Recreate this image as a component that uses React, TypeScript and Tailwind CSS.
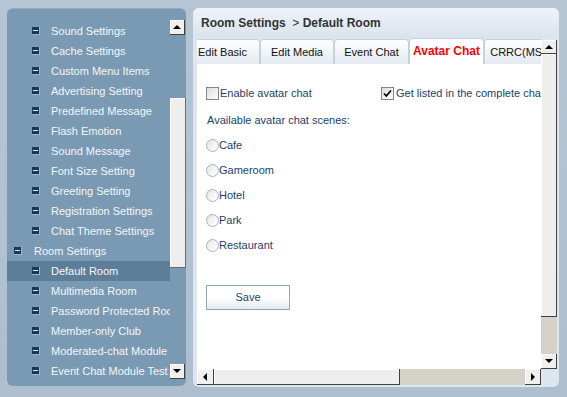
const treeItems: { label: string; level: 0 | 1; selected?: boolean }[] = [
  { label: "Sound Settings", level: 1 },
  { label: "Cache Settings", level: 1 },
  { label: "Custom Menu Items", level: 1 },
  { label: "Advertising Setting", level: 1 },
  { label: "Predefined Message", level: 1 },
  { label: "Flash Emotion", level: 1 },
  { label: "Sound Message", level: 1 },
  { label: "Font Size Setting", level: 1 },
  { label: "Greeting Setting", level: 1 },
  { label: "Registration Settings", level: 1 },
  { label: "Chat Theme Settings", level: 1 },
  { label: "Room Settings", level: 0 },
  { label: "Default Room", level: 1, selected: true },
  { label: "Multimedia Room", level: 1 },
  { label: "Password Protected Room", level: 1 },
  { label: "Member-only Club", level: 1 },
  { label: "Moderated-chat Module", level: 1 },
  { label: "Event Chat Module Test", level: 1 },
];

const tabs = [
  { label: "Edit Basic", w: "w-[75px]" },
  { label: "Edit Media", w: "w-[74px]" },
  { label: "Event Chat", w: "w-[75px]" },
  { label: "Avatar Chat", w: "w-[75px]", active: true },
  { label: "CRRC(MSN Avatar)", w: "w-[110px]" },
];

const scenes = ["Cafe", "Gameroom", "Hotel", "Park", "Restaurant"];

const Arrow = ({ dir }: { dir: "up" | "down" | "left" | "right" }) => {
  if (dir === "up")
    return <span className="w-0 h-0 border-x-[4px] border-x-transparent border-b-[4px] border-b-black" />;
  if (dir === "down")
    return <span className="w-0 h-0 border-x-[4px] border-x-transparent border-t-[4px] border-t-black" />;
  if (dir === "left")
    return <span className="w-0 h-0 border-y-[4px] border-y-transparent border-r-[4px] border-r-black" />;
  return <span className="w-0 h-0 border-y-[4px] border-y-transparent border-l-[4px] border-l-black" />;
};

const ScrollBtn = ({ dir, className = "" }: { dir: "up" | "down" | "left" | "right"; className?: string }) => (
  <div
    className={`flex items-center justify-center bg-[#efefef] border-r border-b border-[#404040] shadow-[inset_1px_1px_0_#ffffff] ${className}`}
  >
    <Arrow dir={dir} />
  </div>
);

const TreeIcon = () => (
  <span className="w-[8px] h-[8px] shrink-0 bg-[#17375c] border-r border-b border-[#9fb4c6] flex items-center justify-center">
    <span className="w-[5px] h-px bg-[#e8eef4]" />
  </span>
);

const Checkbox = ({ checked }: { checked?: boolean }) => (
  <span className="w-[13px] h-[13px] border border-[#858585] bg-gradient-to-br from-[#dedede] to-white flex items-center justify-center shrink-0">
    {checked && (
      <svg width="9" height="9" viewBox="0 0 9 9">
        <path d="M1 4.5 L3.3 7 L8 1.5" fill="none" stroke="#000" strokeWidth="1.8" />
      </svg>
    )}
  </span>
);

const Radio = () => (
  <span className="w-[13px] h-[13px] rounded-full border border-[#b2b2b2] bg-gradient-to-br from-[#e2e2e2] via-[#f4f4f4] to-white shrink-0" />
);

const LeftPanel = () => (
  <div className="w-[179px] h-[378px] rounded-[6px] bg-[#7a9ab4] border-t border-[#92adc3] flex overflow-hidden">
    <div className="w-[163px] pt-[12px] overflow-hidden">
      {treeItems.map((item) => (
        <div
          key={item.label}
          className={`h-[20px] flex items-center whitespace-nowrap text-[#f3f6f9] ${
            item.selected ? "bg-[#5d7e99]" : ""
          } ${item.level === 0 ? "pl-[7px]" : "pl-[25px]"}`}
        >
          <TreeIcon />
          <span className={item.level === 0 ? "ml-[12px]" : "ml-[11px]"}>{item.label}</span>
        </div>
      ))}
    </div>
    <div className="w-[16px] flex flex-col pt-[11px] pb-[7px]">
      <ScrollBtn dir="up" className="w-[15px] h-[15px]" />
      <div className="h-[63px]" />
      <div className="h-[170px] bg-[#eeeeee] border-r border-b border-[#6b6b6b] shadow-[inset_1px_1px_0_#ffffff]" />
      <div className="flex-1" />
      <ScrollBtn dir="down" className="w-[15px] h-[15px]" />
    </div>
  </div>
);

const RightPanel = () => (
  <div className="w-[366px] h-[379px] rounded-[6px] bg-[#dde6ef] flex flex-col overflow-hidden">
    <div className="h-[30px] shrink-0 flex items-center pl-[8px] bg-gradient-to-b from-[#eef3f8] to-[#dae3ec] text-[12px] text-[#333333] whitespace-pre">
      <span className="font-bold">Room Settings</span>
      <span>{"  > "}</span>
      <span className="font-bold">Default Room</span>
    </div>
    <div className="flex-1 flex flex-col pl-[4px] pr-[2px] pb-[2px]">
      <div className="flex h-[331px]">
        <div className="w-[344px] flex flex-col overflow-hidden">
          <div className="h-[26px] shrink-0 flex items-end overflow-hidden">
            <div className="flex items-end -ml-[12px] shrink-0">
              {tabs.map((tab) =>
                tab.active ? (
                  <div
                    key={tab.label}
                    className={`${tab.w} h-[26px] shrink-0 bg-white border border-b-0 border-[#c5d2de] rounded-t-[4px] flex justify-center pt-[6px] text-[12px] font-bold text-[#ff0000] whitespace-nowrap`}
                  >
                    {tab.label}
                  </div>
                ) : (
                  <div
                    key={tab.label}
                    className={`${tab.w} h-[25px] shrink-0 bg-gradient-to-b from-white to-[#e3eaf1] border border-b-0 border-[#c5d2de] rounded-t-[4px] flex justify-center pt-[6px] text-[#111111] whitespace-nowrap`}
                  >
                    {tab.label}
                  </div>
                )
              )}
            </div>
          </div>
          <div className="flex-1 bg-white pt-[23px] pl-[9px] text-[#1b3f6b] whitespace-nowrap">
            <div className="flex items-center h-[13px]">
              <div className="w-[175px] flex items-center shrink-0">
                <Checkbox />
                <span className="ml-[1px]">Enable avatar chat</span>
              </div>
              <div className="flex items-center shrink-0">
                <Checkbox checked />
                <span className="ml-[2px]">Get listed in the complete chat room list</span>
              </div>
            </div>
            <div className="mt-[13px] leading-[14px] pl-[1px]">Available avatar chat scenes:</div>
            <div className="mt-[6px]">
              {scenes.map((s) => (
                <div key={s} className="h-[25px] flex items-center">
                  <Radio />
                  <span>{s}</span>
                </div>
              ))}
            </div>
            <button className="mt-[27px] w-[84px] h-[25px] border border-[#8fa7bb] bg-gradient-to-b from-white via-white to-[#e2eaf2] text-[#1b4474] flex items-center justify-center">
              Save
            </button>
          </div>
        </div>
        <div className="w-[16px] flex flex-col pt-[2px]">
          <ScrollBtn dir="up" className="w-[16px] h-[14px]" />
          <div className="h-[263px] bg-[#eeeeee] border-r border-b border-[#404040] shadow-[inset_1px_1px_0_#ffffff]" />
          <div className="flex-1 bg-[#d5d2c9]" />
          <ScrollBtn dir="down" className="w-[16px] h-[15px]" />
        </div>
      </div>
      <div className="h-[16px] flex">
        <ScrollBtn dir="left" className="w-[17px] h-[16px]" />
        <div className="w-[186px] bg-[#eeeeee] border-r border-b border-[#404040] shadow-[inset_1px_1px_0_#ffffff]" />
        <div className="w-[125px] bg-[#d5d2c9]" />
        <ScrollBtn dir="right" className="w-[16px] h-[16px]" />
        <div className="w-[16px] bg-[#dce6ef]" />
      </div>
    </div>
  </div>
);

export default function App() {
  return (
    <div className="w-[567px] h-[397px] bg-gradient-to-b from-[#b5c5d4] to-[#adbfcf] flex items-start pt-[8px] pl-[7px] gap-[7px] font-['Liberation_Sans',Arial,sans-serif] text-[11px] leading-[13px] overflow-hidden">
      <LeftPanel />
      <RightPanel />
    </div>
  );
}
